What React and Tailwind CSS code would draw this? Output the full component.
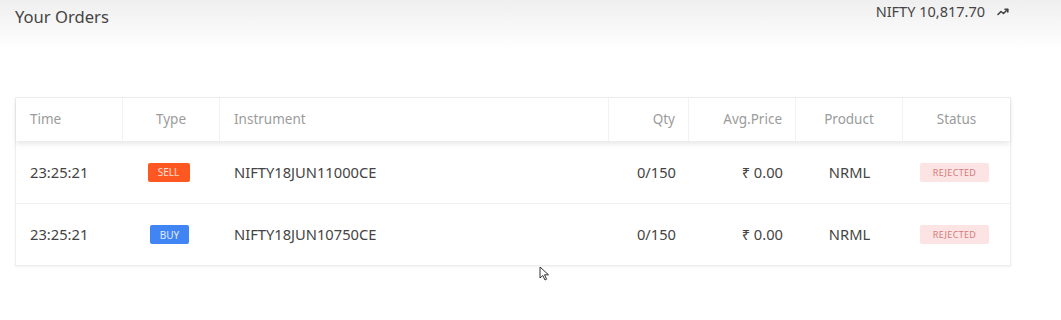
import React from 'react';

const orders = [
  { time: '23:25:21', type: 'SELL', instrument: 'NIFTY18JUN11000CE', qty: '0/150', price: '₹ 0.00', product: 'NRML', status: 'REJECTED' },
  { time: '23:25:21', type: 'BUY', instrument: 'NIFTY18JUN10750CE', qty: '0/150', price: '₹ 0.00', product: 'NRML', status: 'REJECTED' },
];

function TrendIcon() {
  return (
    <svg width="12" height="8" viewBox="0 0 12 8" fill="none" stroke="#444" strokeWidth="1.6" strokeLinecap="round" strokeLinejoin="round">
      <path d="M1 6.5 L4 3.5 L6.5 5.5 L10.5 1.5" />
      <path d="M8 1.2 L10.8 1.2 L10.8 4" />
    </svg>
  );
}

export default function App() {
  return (
    <div className="relative w-[1061px] h-[320px] bg-white text-[#444] overflow-hidden" style={{ fontFamily: '"Noto Sans", "Open Sans", sans-serif' }}>
      <div className="h-[50px] bg-gradient-to-b from-[#efefef] to-white flex justify-between pl-[15px] pr-[52px]">
        <h1 className="text-[16.6px] leading-none pt-[9px] text-[#444]">Your Orders</h1>
        <div className="flex items-center gap-[12px] h-[24px] text-[14.5px]">
          <span>NIFTY 10,817.70</span>
          <TrendIcon />
        </div>
      </div>

      <div className="mt-[47px] ml-[15px] w-[996px] border border-[#eee] shadow-[0_1px_2px_rgba(0,0,0,0.06)]">
        <div className="grid grid-cols-[107px_97px_389px_80px_107px_107px_1fr] h-[43px] items-stretch text-[13.5px] text-[#9b9b9b] shadow-[0_3px_5px_rgba(0,0,0,0.09)] relative">
          <div className="flex items-center pl-[14px] border-r border-[#f2f2f2]">Time</div>
          <div className="flex items-center justify-center border-r border-[#f2f2f2]">Type</div>
          <div className="flex items-center pl-[14px] border-r border-[#f2f2f2]">Instrument</div>
          <div className="flex items-center justify-end pr-[13px] border-r border-[#f2f2f2]">Qty</div>
          <div className="flex items-center justify-end pr-[13px] border-r border-[#f2f2f2]">Avg.Price</div>
          <div className="flex items-center justify-center border-r border-[#f2f2f2]">Product</div>
          <div className="flex items-center justify-center">Status</div>
        </div>
        {orders.map((o, i) => (
          <div
            key={i}
            className={`grid grid-cols-[107px_97px_389px_80px_107px_107px_1fr] h-[62px] items-center text-[14.7px] text-[#444] ${i > 0 ? 'border-t border-[#f0f0f0]' : ''}`}
          >
            <div className="pl-[14px]">{o.time}</div>
            <div className="flex justify-center">
              {o.type === 'SELL' ? (
                <span className="bg-[#ff5722] text-white/80 text-[10px] leading-none w-[42px] h-[19px] flex items-center justify-center rounded-[2px] mr-[6px]">SELL</span>
              ) : (
                <span className="bg-[#4184f3] text-white/85 text-[10px] leading-none w-[39px] h-[19px] flex items-center justify-center rounded-[2px] mr-[4px]">BUY</span>
              )}
            </div>
            <div className="pl-[14px]">{o.instrument}</div>
            <div className="text-right pr-[13px]">{o.qty}</div>
            <div className="text-right pr-[13px]">{o.price}</div>
            <div className="text-center">{o.product}</div>
            <div className="flex justify-center">
              <span className="bg-[#fde4e4] text-[#d27a7a] text-[9px] tracking-[0.3px] leading-none w-[69px] h-[19px] flex items-center justify-center rounded-[2px] mr-[4px]">{o.status}</span>
            </div>
          </div>
        ))}
      </div>

      <svg className="absolute left-[539px] top-[266px]" width="12" height="15" viewBox="0 0 12 15">
        <path d="M1 1 L1 12 L3.8 9.5 L6 14 L7.6 13.2 L5.5 8.8 L9.5 8.8 Z" fill="white" stroke="#333" strokeWidth="1" strokeLinejoin="round" />
      </svg>
    </div>
  );
}
